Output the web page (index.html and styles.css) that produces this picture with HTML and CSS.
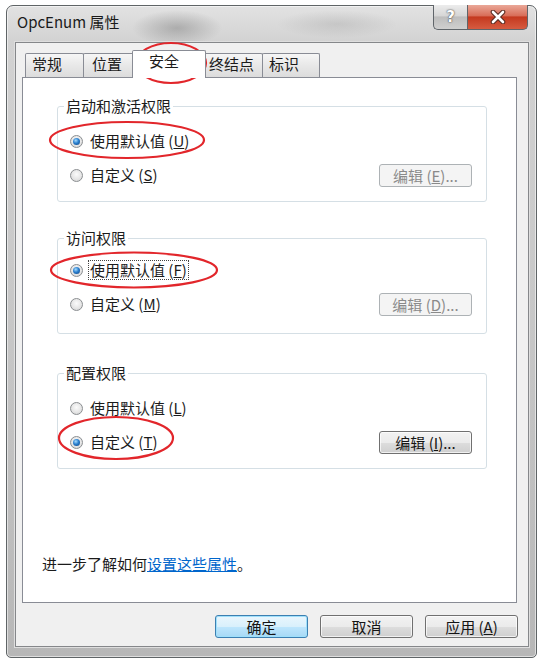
FILE: index.html
```html
<!DOCTYPE html>
<html lang="zh-CN">
<head>
    <meta charset="UTF-8">
    <meta name="viewport" content="width=device-width, initial-scale=1.0">
    <title>OpcEnum 属性</title>
    <link rel="stylesheet" href="styles.css">
</head>
<body>
    <div class="window">
        <div class="titlebar">
            <span class="title">OpcEnum 属性</span>
            <div class="caption-btns">
                <span class="cap help">?</span>
                <span class="cap close">
                    <svg width="18" height="14" viewBox="0 0 18 14">
                        <path d="M4 2 L14 12 M14 2 L4 12" stroke="#5a2b22" stroke-width="4.6" stroke-linecap="round"/>
                        <path d="M4 2 L14 12 M14 2 L4 12" stroke="#fff" stroke-width="2.6" stroke-linecap="round"/>
                    </svg>
                </span>
            </div>
        </div>

        <div class="client">
            <div class="tabs">
                <span class="tab">常规</span>
                <span class="tab t2">位置</span>
                <span class="tab active">安全</span>
                <span class="tab t4">终结点</span>
                <span class="tab t5">标识</span>
            </div>

            <div class="panel">
                <div class="group g1">
                    <span class="legend">启动和激活权限</span>
                    <div class="rows">
                        <div class="row">
                            <span class="radio on"></span>
                            <span class="label">使用默认值 (<u>U</u>)</span>
                        </div>
                        <div class="row">
                            <span class="radio"></span>
                            <span class="label">自定义 (<u>S</u>)</span>
                            <span class="edit">编辑 (<u>E</u>)...</span>
                        </div>
                    </div>
                </div>

                <div class="group g2">
                    <span class="legend">访问权限</span>
                    <div class="rows">
                        <div class="row">
                            <span class="radio on"></span>
                            <span class="label focus">使用默认值 (<u>F</u>)</span>
                        </div>
                        <div class="row">
                            <span class="radio"></span>
                            <span class="label">自定义 (<u>M</u>)</span>
                            <span class="edit">编辑 (<u>D</u>)...</span>
                        </div>
                    </div>
                </div>

                <div class="group g3">
                    <span class="legend">配置权限</span>
                    <div class="rows">
                        <div class="row">
                            <span class="radio"></span>
                            <span class="label">使用默认值 (<u>L</u>)</span>
                        </div>
                        <div class="row">
                            <span class="radio on"></span>
                            <span class="label">自定义 (<u>T</u>)</span>
                            <span class="edit enabled">编辑 (<u>I</u>)...</span>
                        </div>
                    </div>
                </div>

                <p class="more">进一步了解如何<a href="#">设置这些属性</a>。</p>
            </div>

            <div class="actions">
                <span class="btn default">确定</span>
                <span class="btn">取消</span>
                <span class="btn">应用 (<u>A</u>)</span>
            </div>
        </div>
    </div>

    <!-- red marks drawn over the screenshot -->
    <svg class="marks" width="543" height="661" viewBox="0 0 543 661">
        <ellipse cx="171" cy="63" rx="35" ry="20" />
        <ellipse cx="127" cy="140" rx="77" ry="18" />
        <ellipse cx="134" cy="270" rx="83" ry="17.5" />
        <ellipse cx="116" cy="438" rx="57" ry="21" />
    </svg>
</body>
</html>
```

FILE: styles.css
```css
* {
    box-sizing: border-box;
}
body {
    margin: 0;
    width: 543px;
    height: 661px;
    overflow: hidden;
    position: relative;
    background: #fff;
    font-family: "Noto Sans CJK SC", "Noto Sans", sans-serif;
    font-size: 15px;
    color: #1b1b1b;
}
.window {
    margin: 5px 0 0 6px;
    width: 531px;
    height: 653px;
    border: 1px solid #5f6466;
    border-radius: 7px 7px 5px 5px;
    padding: 0 7px 10px 8px;
    display: flex;
    flex-direction: column;
    background:
        radial-gradient(ellipse 45px 18px at 170px 22px, rgba(90,90,90,0.35), rgba(90,90,90,0)),
        radial-gradient(ellipse 60px 14px at 330px 18px, rgba(120,120,120,0.2), rgba(120,120,120,0)),
        linear-gradient(to bottom, #e2e2e2 0, #d2d2d2 36px, #c4c4c4 60%, #b7b7b7 100%);
    box-shadow: inset 0 0 0 1px rgba(255,255,255,0.55);
}
.titlebar {
    height: 36px;
    display: flex;
    align-items: flex-start;
}
.title {
    padding: 6px 0 0 2px;
    line-height: 20px;
    color: #1a1a1a;
}
.caption-btns {
    margin-left: auto;
    margin-top: -1px;
    margin-right: 1px;
    display: flex;
}
.cap {
    height: 25px;
    display: flex;
    align-items: center;
    justify-content: center;
    border: 1px solid #60656a;
    border-top: none;
}
.help {
    width: 34px;
    border-right: none;
    border-radius: 0 0 0 5px;
    background: linear-gradient(to bottom, #ececec 0, #d6d6d6 45%, #bdbdbd 50%, #cfcfcf 100%);
    font-family: "DejaVu Sans", sans-serif;
    font-weight: bold;
    font-size: 15px;
    color: #fff;
    text-shadow: 0 0 1px #444, 0 0 2px #555;
}
.close {
    width: 61px;
    border-radius: 0 0 5px 0;
    background: linear-gradient(to bottom, #eaa898 0, #d86d58 45%, #c4391f 50%, #d65b40 100%);
}
.client {
    flex: 1;
    background: #f0f0f0;
    border: 1px solid #85878a;
    box-shadow: 0 0 0 1px #dedede;
    padding: 7px 11px 0 6px;
    display: flex;
    flex-direction: column;
}
.tabs {
    display: flex;
    align-items: flex-end;
    height: 27px;
    padding-left: 3px;
}
.tab {
    height: 24px;
    width: 59px;
    margin-right: -1px;
    padding-left: 6px;
    line-height: 20px;
    border: 1px solid #898c95;
    border-bottom: none;
    border-radius: 2px 2px 0 0;
    background: linear-gradient(to bottom, #f6f6f6 0, #e8e8e8 50%, #dcdcdc 100%);
}
.tab.t2 {
    width: 53px;
    padding-left: 8px;
}
.tab.active {
    position: relative;
    z-index: 1;
    height: 28px;
    width: 74px;
    margin: 0 -2px -1px -3px;
    padding-left: 16px;
    background: #fff;
}
.tab.t4 {
    width: 59px;
    padding-left: 4px;
}
.tab.t5 {
    width: 58px;
}
.panel {
    height: 526px;
    border: 1px solid #898c95;
    background: #fff;
    display: flex;
    flex-direction: column;
}
.group {
    width: 430px;
    margin-left: 34px;
    border: 1px solid #d5dfe5;
    border-radius: 3px;
    padding: 0 14px 9px 12px;
}
.g1 {
    margin-top: 28px;
}
.g2 {
    margin-top: 36px;
    padding-bottom: 12px;
}
.g3 {
    margin-top: 39px;
}
.legend {
    display: block;
    width: fit-content;
    margin: -11px 0 0 -6px;
    padding: 0 2px;
    line-height: 20px;
    background: #fff;
}
.rows {
    margin-top: 8px;
}
.g2 .rows {
    margin-top: 5px;
}
.row {
    height: 34px;
    display: flex;
    align-items: center;
}
.radio {
    position: relative;
    flex: none;
    width: 13px;
    height: 13px;
    margin-right: 6px;
    border-radius: 50%;
    border: 1px solid #8b8e91;
    background: radial-gradient(circle at 50% 40%, #fbfbfb 0, #e6e6e6 55%, #cfcfcf 100%);
}
.radio.on::after {
    content: "";
    position: absolute;
    inset: 2px;
    border-radius: 50%;
    background: radial-gradient(circle at 40% 35%, #a6dcff 0, #2a7fce 45%, #0e3f7c 100%);
}
.label {
    line-height: 18px;
    padding: 0 1px;
}
.label.focus {
    outline: 1px dotted #444;
}
.edit {
    margin-left: auto;
    width: 93px;
    height: 23px;
    display: flex;
    align-items: center;
    justify-content: center;
    border: 1px solid #adb2b5;
    border-radius: 3px;
    background: #f4f4f4;
    color: #8a8a8a;
    line-height: 1;
}
.edit.enabled,
.btn {
    border: 1px solid #707070;
    background: linear-gradient(to bottom, #f2f2f2 0, #ebebeb 50%, #dddddd 51%, #cfcfcf 100%);
    color: #141414;
    box-shadow: inset 0 0 0 1px rgba(255,255,255,0.7);
}
.more {
    margin: auto 0 28px 19px;
    line-height: 20px;
}
.more a {
    color: #0066cc;
    text-decoration: underline;
}
.actions {
    display: flex;
    justify-content: flex-end;
    gap: 12px;
    margin: 12px -1px 0 0;
}
.btn {
    width: 93px;
    height: 23px;
    display: flex;
    align-items: center;
    justify-content: center;
    border-radius: 3px;
    line-height: 1;
}
.btn.default {
    border-color: #3c7fb1;
    background: linear-gradient(to bottom, #eaf6fd 0, #d9f0fc 50%, #bee6fd 51%, #a7d9f5 100%);
    box-shadow: inset 0 0 0 1px #9fe0fb;
}
.marks {
    position: absolute;
    top: 0;
    left: 0;
    pointer-events: none;
}
.marks ellipse {
    fill: none;
    stroke: #e2262b;
    stroke-width: 2.2;
}
```
